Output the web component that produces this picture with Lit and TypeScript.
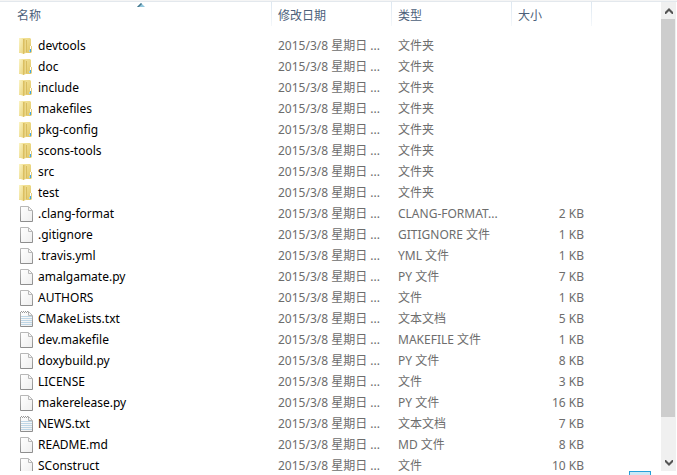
import { LitElement, html, css, svg } from "lit";
import { customElement, property } from "lit/decorators.js";

type Kind = "folder" | "file" | "text";
interface Entry {
  name: string;
  kind: Kind;
  type: string;
  size: string;
}

const DATE = "2015/3/8 星期日 ...";
const folder = (name: string): Entry => ({ name, kind: "folder", type: "文件夹", size: "" });
const file = (name: string, type: string, size: string, kind: Kind = "file"): Entry => ({ name, kind, type, size });

const ENTRIES: Entry[] = [
  folder("devtools"),
  folder("doc"),
  folder("include"),
  folder("makefiles"),
  folder("pkg-config"),
  folder("scons-tools"),
  folder("src"),
  folder("test"),
  file(".clang-format", "CLANG-FORMAT...", "2 KB"),
  file(".gitignore", "GITIGNORE 文件", "1 KB"),
  file(".travis.yml", "YML 文件", "1 KB"),
  file("amalgamate.py", "PY 文件", "7 KB"),
  file("AUTHORS", "文件", "1 KB"),
  file("CMakeLists.txt", "文本文档", "5 KB", "text"),
  file("dev.makefile", "MAKEFILE 文件", "1 KB"),
  file("doxybuild.py", "PY 文件", "8 KB"),
  file("LICENSE", "文件", "3 KB"),
  file("makerelease.py", "PY 文件", "16 KB"),
  file("NEWS.txt", "文本文档", "7 KB", "text"),
  file("README.md", "MD 文件", "8 KB"),
  file("SConstruct", "文件", "10 KB"),
];

@customElement("file-icon")
export class FileIcon extends LitElement {
  @property() kind: Kind = "file";

  static styles = css`
    :host { display: block; width: 16px; height: 16px; }
    svg { display: block; }
  `;

  private folderArt() {
    return svg`
      <defs>
        <linearGradient id="back" x1="0" x2="1" y2="1"><stop offset="0" stop-color="#f8eba6"/><stop offset="1" stop-color="#e0c565"/></linearGradient>
        <linearGradient id="front" x1="0" x2="1" y2="1"><stop offset="0" stop-color="#fbf4c4"/><stop offset="1" stop-color="#e8d27a"/></linearGradient>
        <linearGradient id="flap" x1="0" x2="1"><stop offset="0" stop-color="#d6b856"/><stop offset="1" stop-color="#f0de94"/></linearGradient>
      </defs>
      <path d="M1 0H12L13 1V15H1Z" fill="url(#back)"/>
      <path d="M13 8H14V14L13 15Z" fill="#e6cf7c"/>
      <path d="M12 8H13V12H12Z" fill="#fff"/>
      <path d="M12 11H13V14H12Z" fill="#3fa6e4"/>
      <path d="M11 12H12V14H11Z" fill="#a9d5e8"/>
      <path d="M1 0H3L6 1V16L1 14.5Z" fill="url(#front)"/>
      <path d="M5 1L8 1V15L5 16Z" fill="url(#flap)"/>
      <path d="M8 2H9V14H8Z" fill="#d8bd60"/>`;
  }

  private pageArt() {
    const lined = this.kind === "text";
    return svg`
      <defs>
        <linearGradient id="sheet" x2="1" y2="1"><stop offset="0" stop-color="#fff"/><stop offset="1" stop-color="#eee"/></linearGradient>
        <linearGradient id="edge" x2="0" y2="1"><stop offset="0" stop-color="#b8b8b8"/><stop offset="1" stop-color="#8e8e8e"/></linearGradient>
      </defs>
      <path d="M2.5 .5H10.5L14.5 4.5V15.5H2.5Z" fill="url(#sheet)" stroke="url(#edge)"/>
      <path d="M10.5 1V4.5H14" fill="#f6f6f6" stroke="#b8b8b8"/>
      ${lined
        ? svg`<path d="M3 5.5H14M3 7.5H14M3 9.5H14M3 11.5H14M3 13.5H14" stroke="#bed6e6"/>
            <path d="M2 .5H10" stroke="#fff"/><path d="M3 .5H11M2 1.5H11" stroke="#9b9b9b" stroke-dasharray="1 1"/>`
        : ""}`;
  }

  render() {
    return html`<svg width="16" height="16" viewBox="0 0 16 16" aria-hidden="true">
      ${this.kind === "folder" ? this.folderArt() : this.pageArt()}
    </svg>`;
  }
}

@customElement("side-scroller")
export class SideScroller extends LitElement {
  static styles = css`
    :host { display: flex; flex-direction: column; background: #f0f0f0; }
    button { height: 17px; padding: 0; border: 0; background: none; display: grid; place-items: center; }
    .track { flex: 1; display: flex; flex-direction: column; }
    .thumb { height: 91.5%; margin-right: 1px; background: #cdcdcd; }
  `;
  render() {
    return html`
      <button aria-label="Scroll up"><svg width="8" height="6" viewBox="0 0 8 6"><path d="M0 4L4 0L8 4V6H7L4 3L1 6H0Z" fill="#555"/></svg></button>
      <div class="track"><div class="thumb"></div></div>
      <button aria-label="Scroll down"><svg width="8" height="6" viewBox="0 0 8 6"><path d="M0 2L4 6L8 2V0H7L4 3L1 0H0Z" fill="#555"/></svg></button>`;
  }
}

@customElement("app-root")
export class AppRoot extends LitElement {
  static styles = css`
    :host {
      display: flex; flex-direction: column; height: 100vh; box-sizing: border-box;
      overflow: hidden; background: #fff; color: #6d6d6d; border-top: 1px solid #f5f5f5;
      font: 12px/21px "Noto Sans", "Noto Sans CJK SC", sans-serif;
    }
    .view { flex: 1; min-height: 0; display: flex; border-top: 1px solid #e3e8ed; padding-right: 1px; }
    .list { flex: 1; min-width: 0; overflow: hidden; }
    side-scroller { width: 15px; }
    table { width: 100%; table-layout: fixed; border-collapse: separate; border-spacing: 0; }
    .name { width: 272px; }
    .wide { width: 120px; }
    .size { width: 80px; }
    th, td { padding: 0; text-align: left; font-weight: 400; white-space: nowrap; }
    th { position: relative; height: 33px; vertical-align: top; }
    th button {
      display: block; width: 100%; height: 24px; padding: 2px 0 0 6px; border: 0;
      border-right: 1px solid; border-image: linear-gradient(#dbe6f0, #f5f8fb) 1;
      background: none; color: #4c607a; font: inherit; text-align: left;
    }
    th:first-child button { padding-left: 17px; }
    .sort { position: absolute; left: 137px; top: 1px; }
    td { height: 21px; padding-left: 6px; }
    td:first-child { padding-left: 18px; }
    .entry { display: flex; align-items: center; gap: 4px; color: #000; text-decoration: none; }
    td.amount { padding: 0 8px 0 0; text-align: right; }
    .status { height: 4px; display: flex; justify-content: flex-end; padding-right: 26px; }
    .layout { width: 22px; height: 16px; padding: 0; border: 1px solid #26a0da; background: #cbe8f6; flex: none; }
  `;

  render() {
    return html`
      <div class="view">
        <div class="list">
          <table>
            <colgroup><col class="name"><col class="wide"><col class="wide"><col class="size"><col></colgroup>
            <thead>
              <tr>
                <th aria-sort="ascending"><button>名称</button>
                  <svg class="sort" width="8" height="4" viewBox="0 0 8 4"><path d="M0 4L4 0L8 4Z" fill="#91c6dc"/><path d="M0 4L4 0L5 1L2 4Z" fill="#47768b"/></svg></th>
                <th><button>修改日期</button></th>
                <th><button>类型</button></th>
                <th><button>大小</button></th>
                <th></th>
              </tr>
            </thead>
            <tbody>
              ${ENTRIES.map((e) => html`<tr>
                <td><a class="entry" href="#"><file-icon .kind=${e.kind}></file-icon>${e.name}</a></td>
                <td>${DATE}</td>
                <td>${e.type}</td>
                <td class="amount">${e.size}</td>
                <td></td>
              </tr>`)}
            </tbody>
          </table>
        </div>
        <side-scroller></side-scroller>
      </div>
      <div class="status"><button class="layout" aria-label="Details view"></button></div>`;
  }
}
